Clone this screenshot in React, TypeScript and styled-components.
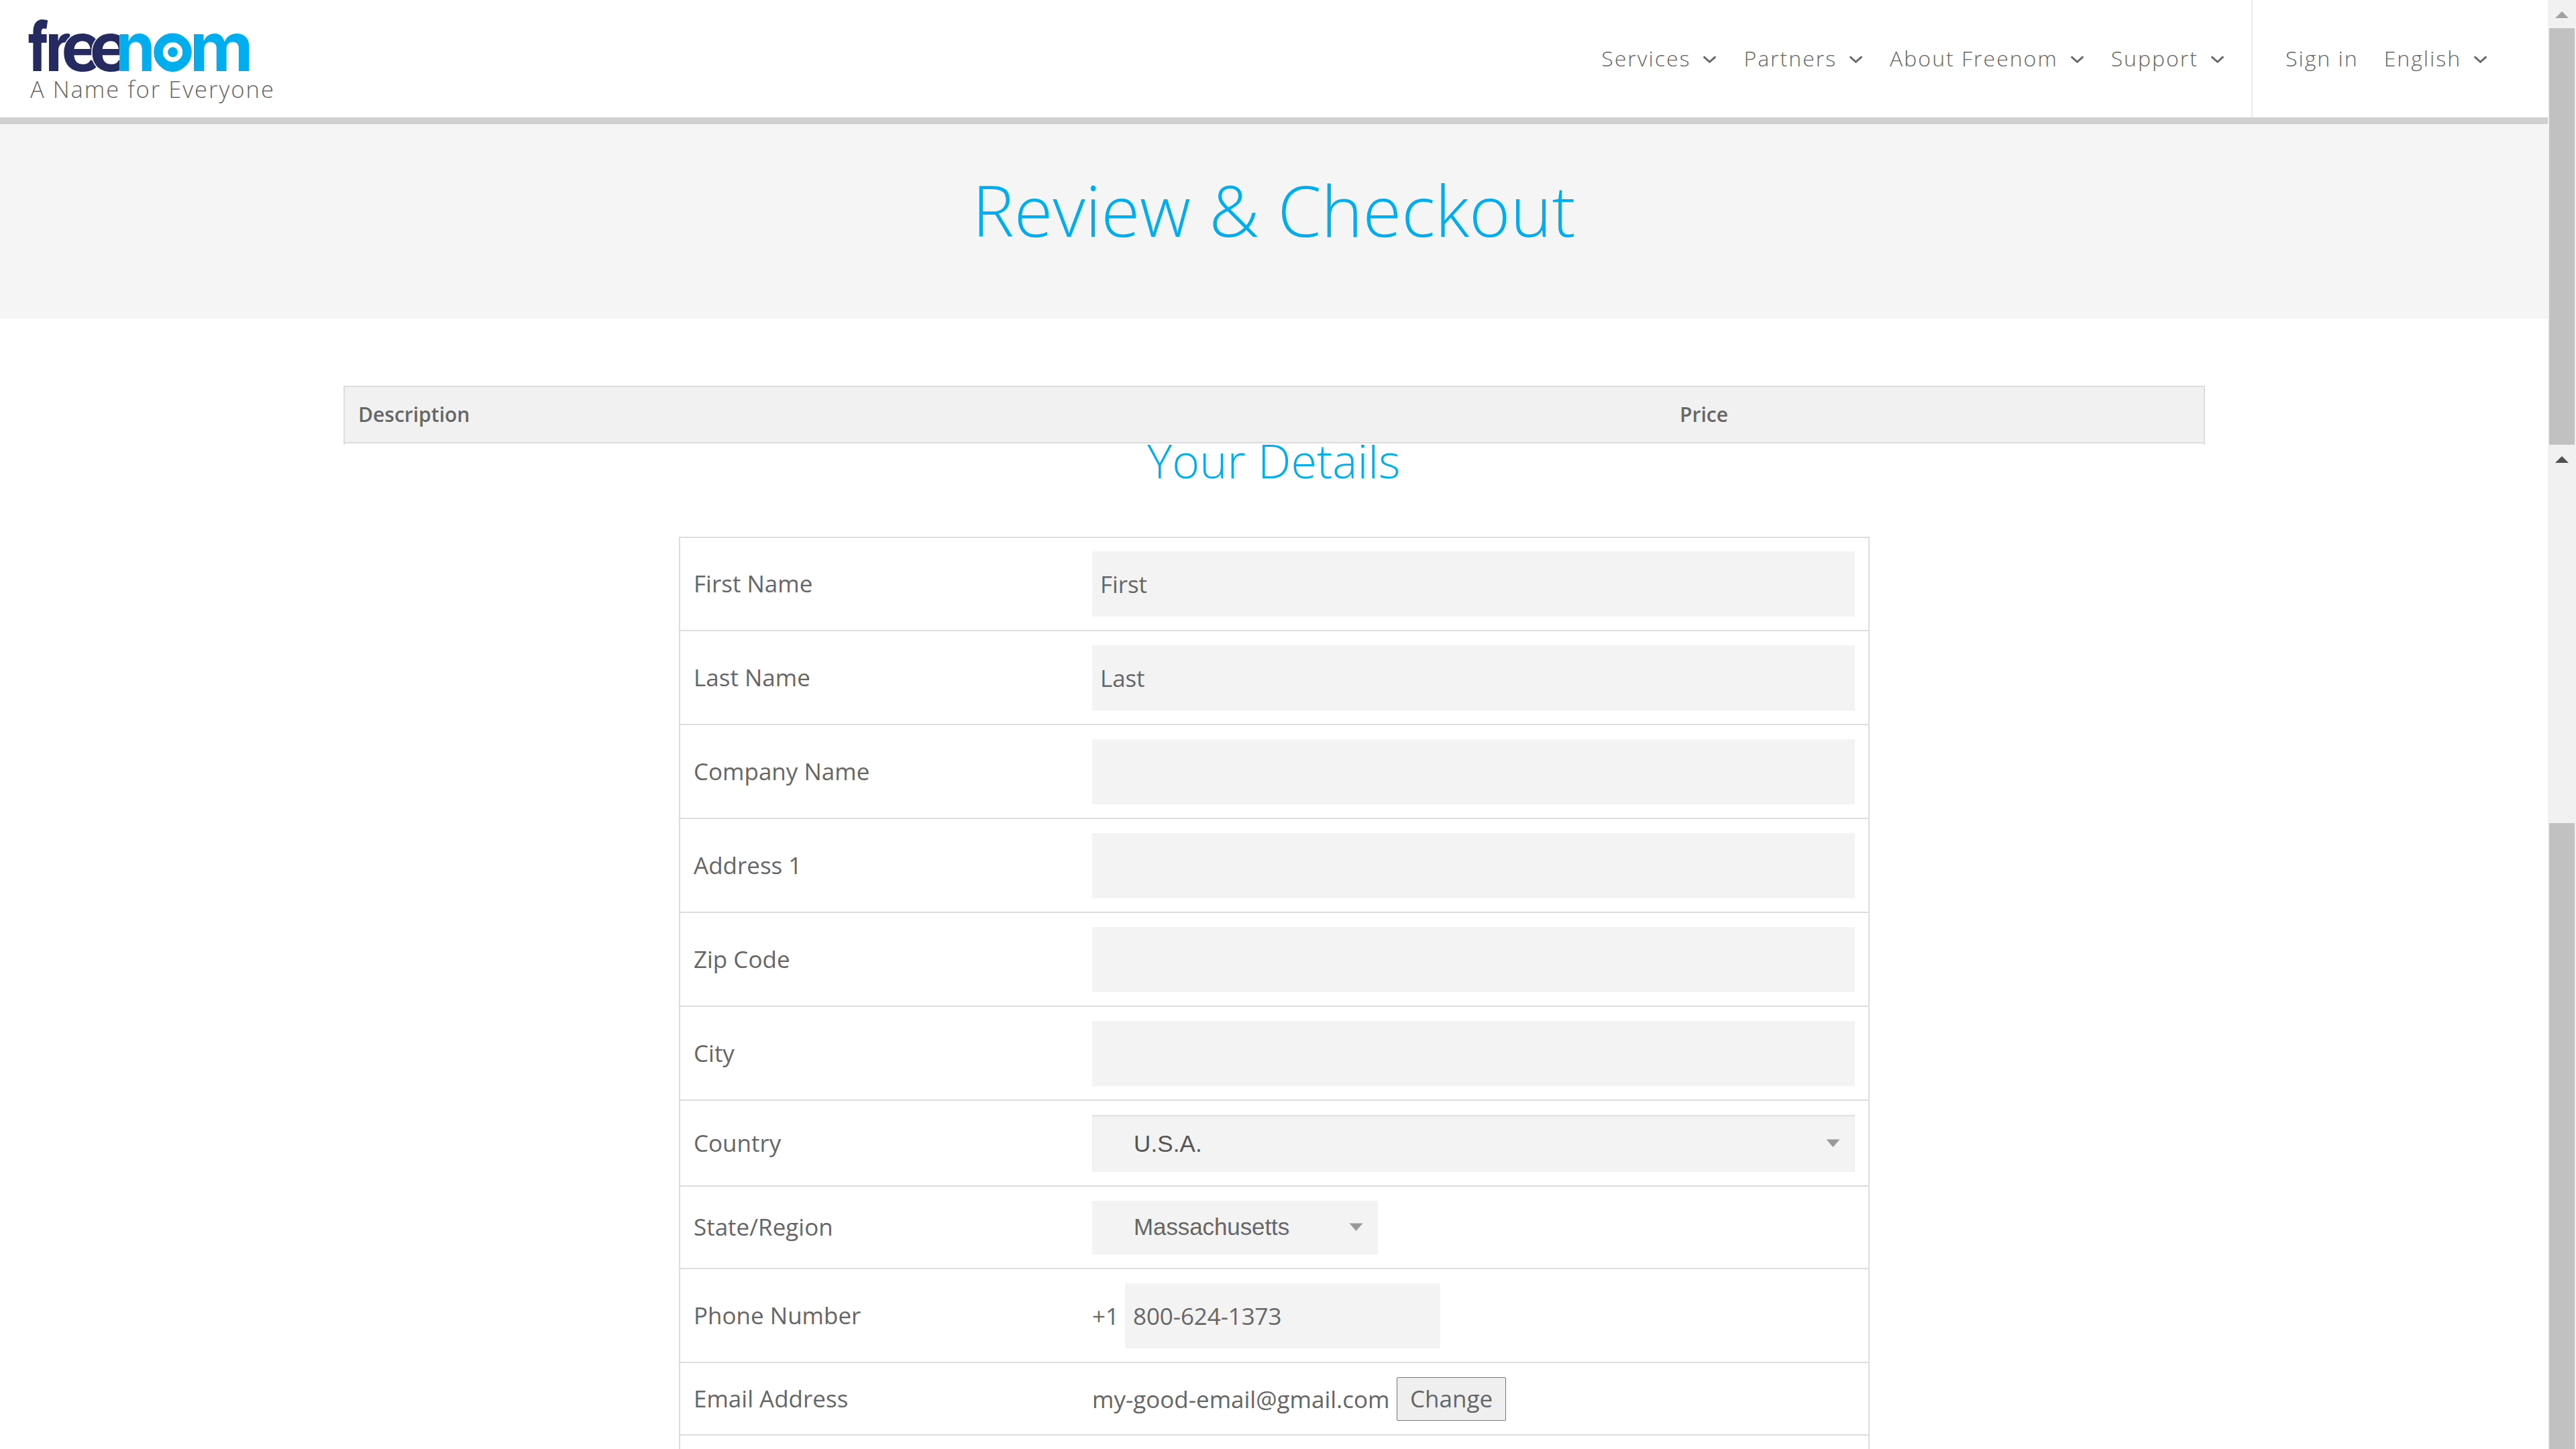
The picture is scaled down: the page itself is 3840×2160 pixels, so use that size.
import React from "react";
import styled, { createGlobalStyle, css } from "styled-components";

const sans = `"Open Sans", "Noto Sans", sans-serif`;
const arial = `"Liberation Sans", Arial, sans-serif`;
const ink = "#666666";
const cyan = "#00aeef";
const navy = "#252b60";
const line = "#dddddd";
const fieldBg = "#f3f3f3";

const GlobalStyle = createGlobalStyle`
  *, *::before, *::after { box-sizing: border-box; }
  html, body { margin: 0; background: #ffffff; overflow: hidden; }
  body { font-family: ${sans}; font-size: 35px; color: ${ink}; }
`;

const Shell = styled.div`
  display: grid;
  grid-template-columns: 1fr 42px;
  width: 3840px;
  height: 2160px;
  overflow: hidden;
`;

const Page = styled.div`
  display: flex;
  flex-direction: column;
  min-width: 0;
  height: 2160px;
  overflow: hidden;
`;

/* ---------- header ---------- */

const Header = styled.header`
  display: flex;
  flex: none;
  height: 185px;
  background: #ffffff;
  border-bottom: 10px solid #d0d0d0;
`;

const Brand = styled.a`
  display: flex;
  flex-direction: column;
  padding: 20px 0 0 43px;
  color: inherit;
  text-decoration: none;
`;

const Wordmark = styled.svg`
  display: block;
  width: 340px;
  height: 90px;
  overflow: visible;
  font-family: Inter, ${arial};
  font-size: 101px;
  font-weight: 700;
`;

const Tagline = styled.span`
  padding-left: 2px;
  font-size: 34.5px;
  font-weight: 300;
  line-height: 45px;
  letter-spacing: 2px;
  white-space: nowrap;
`;

const Nav = styled.nav`
  display: flex;
  align-items: center;
  gap: 40px;
  margin-left: auto;
  padding-right: 40px;
  border-right: 2px solid #ececec;
`;

const UserNav = styled.nav`
  display: flex;
  align-items: center;
  gap: 38px;
  width: 440px;
  padding-left: 49px;
`;

const NavLink = styled.a`
  display: flex;
  align-items: center;
  gap: 18px;
  padding-bottom: 2px;
  font-size: 32px;
  font-weight: 300;
  line-height: 44px;
  letter-spacing: 2px;
  white-space: nowrap;
  color: ${ink};
  text-decoration: none;
`;

const ChevronSvg = styled.svg`
  display: block;
  width: 21px;
  height: 13px;
  margin-top: 5px;
  fill: none;
  stroke: ${ink};
  stroke-width: 2.8;
`;

/* ---------- title band ---------- */

const Hero = styled.section`
  flex: none;
  height: 290px;
  padding-top: 58px;
  background: #f5f5f5;
  text-align: center;
`;

const Title = styled.h1`
  margin: 0;
  font-size: 105px;
  font-weight: 300;
  line-height: 140px;
  color: ${cyan};
`;

/* ---------- cart ---------- */

const Cart = styled.section`
  flex: none;
  display: flex;
  width: 2775px;
  height: 88px;
  margin: 100px 0 0 512px;
  border: solid ${line};
  border-width: 2px 2px 0;
`;

const CartHead = styled.div`
  display: grid;
  grid-template-columns: 1970px 1fr;
  align-items: center;
  width: 100%;
  height: 84px;
  background: #f1f1f1;
  border-bottom: 2px solid ${line};
  font-size: 30px;
  font-weight: 600;
  line-height: 40px;
`;

const CartCell = styled.span`
  padding-left: 20px;
`;

/* ---------- details ---------- */

const DetailsTitle = styled.h2`
  flex: none;
  height: 137px;
  margin: 0;
  overflow: hidden;
  font-size: 70px;
  font-weight: 300;
  line-height: 46px;
  text-align: center;
  color: ${cyan};
`;

const Form = styled.form`
  flex: none;
  width: 1775px;
  margin-left: 1012px;
  border: 2px solid ${line};
  border-bottom: 0;
`;

const Row = styled.div<{ $first?: boolean }>`
  display: grid;
  grid-template-columns: 594px 1137px;
  align-items: center;
  padding: ${(p) => (p.$first ? 20 : 21)}px 20px 20px;
  border-bottom: 2px solid ${line};
`;

const EmptyRow = styled.div`
  height: 20px;
`;

const Label = styled.label`
  padding-bottom: 2px;
  line-height: 48px;
`;

const Field = styled.div`
  display: flex;
  align-items: center;
`;

const Input = styled.input<{ $width?: number }>`
  width: ${(p) => (p.$width ? `${p.$width}px` : "100%")};
  height: 97px;
  padding: 0 12px;
  border: 0;
  outline: 0;
  border-radius: 0;
  background: ${fieldBg};
  font: 400 35px ${sans};
  letter-spacing: -0.1px;
  color: ${ink};
`;

const SelectBox = styled.button<{ $wide?: boolean }>`
  display: flex;
  align-items: center;
  justify-content: space-between;
  border: 0;
  background: ${fieldBg};
  font: 400 35px/44px ${arial};
  ${(p) =>
    p.$wide
      ? css`
          width: 100%;
          height: 85px;
          padding: 0 22px 0 62px;
          color: #555555;
          letter-spacing: 0.1px;
          box-shadow: inset 0 2px 2px rgba(0, 0, 0, 0.075);
        `
      : css`
          width: 426px;
          height: 80px;
          padding: 0 22px 2px 62px;
          color: ${ink};
          letter-spacing: -0.1px;
        `}
`;

const CaretSvg = styled.svg`
  display: block;
  width: 21px;
  height: 13px;
  fill: #999999;
`;

const Prefix = styled.span`
  width: 49px;
  line-height: 48px;
`;

const Email = styled.span`
  width: 454px;
  line-height: 48px;
`;

const ChangeButton = styled.button`
  display: flex;
  align-items: center;
  justify-content: center;
  width: 163px;
  height: 65px;
  padding: 0 0 2px;
  border: 1px solid #767676;
  border-radius: 2px;
  background: #efefef;
  font: 400 35px/48px ${sans};
  color: ${ink};
`;

/* ---------- scrollbar ---------- */

const Rail = styled.aside`
  display: flex;
  flex-direction: column;
  height: 2160px;
  padding: 0 2px;
  background: #f1f1f1;
`;

const RailButton = styled.div<{ $height: number }>`
  flex: none;
  display: flex;
  justify-content: center;
  height: ${(p) => p.$height}px;
  padding-top: 17px;
`;

const Thumb = styled.div<{ $height: number }>`
  flex: none;
  height: ${(p) => p.$height}px;
  background: #c1c1c1;
`;

const ArrowSvg = styled.svg<{ $color: string }>`
  display: block;
  width: 20px;
  height: 10px;
  fill: ${(p) => p.$color};
`;

const Chevron = () => (
  <ChevronSvg viewBox="0 0 21 13">
    <path d="M1.6 1.4 L10.5 9.3 L19.4 1.4" />
  </ChevronSvg>
);

const Caret = () => (
  <CaretSvg viewBox="0 0 21 13">
    <path d="M0.5 0.5 H20.5 L10.5 12 Z" />
  </CaretSvg>
);

const Arrow = ({ color }: { color: string }) => (
  <ArrowSvg viewBox="0 0 20 10" $color={color}>
    <path d="M0 10 L10 0 L20 10 Z" />
  </ArrowSvg>
);

type GlyphProps = { ch: string; x: number; sx?: number; fill: string; halo?: boolean; weight?: number };

const Glyph = ({ ch, x, sx = 1, fill, halo, weight }: GlyphProps) => (
  <text
    transform={`translate(${x} 105.7) scale(${sx} 1)`}
    fill={fill}
    fontWeight={weight}
    stroke={halo ? "#ffffff" : "none"}
    strokeWidth={halo ? 3 : 0}
    paintOrder="stroke"
  >
    {ch}
  </text>
);

const Logo = () => (
  <Wordmark viewBox="43 20 340 90">
    <Glyph ch="f" x={42} sx={0.72} fill={navy} weight={800} />
    <Glyph ch="r" x={67} sx={0.95} fill={navy} />
    <Glyph ch="e" x={91.2} sx={1.03} fill={navy} halo />
    <Glyph ch="e" x={133.5} sx={1.03} fill={navy} halo />
    {/* the second "e" stops where the cyan half begins */}
    <rect x="178.3" y="40" width="22" height="70" fill="#ffffff" />
    <Glyph ch="n" x={172.5} sx={0.94} fill={cyan} />
    <Glyph ch="o" x={229.6} sx={0.9} fill={cyan} />
    <circle cx="257.5" cy="77.7" r="21.5" fill="#ffffff" stroke={cyan} strokeWidth="13.6" />
    <circle cx="257.5" cy="77.7" r="7.4" fill={cyan} />
    <Glyph ch="m" x={282.6} sx={1.035} fill={cyan} />
  </Wordmark>
);

const textRows = [
  { label: "First Name", value: "First" },
  { label: "Last Name", value: "Last" },
  { label: "Company Name", value: "" },
  { label: "Address 1", value: "" },
  { label: "Zip Code", value: "" },
  { label: "City", value: "" },
];

export default function App() {
  return (
    <>
      <GlobalStyle />
      <Shell>
        <Page>
          <Header>
            <Brand>
              <Logo />
              <Tagline>A Name for Everyone</Tagline>
            </Brand>
            <Nav>
              {["Services", "Partners", "About Freenom", "Support"].map((item) => (
                <NavLink key={item}>
                  {item}
                  <Chevron />
                </NavLink>
              ))}
            </Nav>
            <UserNav>
              <NavLink>Sign in</NavLink>
              <NavLink>
                English
                <Chevron />
              </NavLink>
            </UserNav>
          </Header>

          <Hero>
            <Title>Review &amp; Checkout</Title>
          </Hero>

          <Cart>
            <CartHead>
              <CartCell>Description</CartCell>
              <CartCell>Price</CartCell>
            </CartHead>
          </Cart>

          <DetailsTitle>Your Details</DetailsTitle>

          <Form>
            {textRows.map((row, i) => (
              <Row key={row.label} $first={i === 0}>
                <Label>{row.label}</Label>
                <Field>
                  <Input defaultValue={row.value} />
                </Field>
              </Row>
            ))}
            <Row>
              <Label>Country</Label>
              <Field>
                <SelectBox type="button" $wide>
                  U.S.A.
                  <Caret />
                </SelectBox>
              </Field>
            </Row>
            <Row>
              <Label>State/Region</Label>
              <Field>
                <SelectBox type="button">
                  Massachusetts
                  <Caret />
                </SelectBox>
              </Field>
            </Row>
            <Row>
              <Label>Phone Number</Label>
              <Field>
                <Prefix>+1</Prefix>
                <Input $width={470} defaultValue="800-624-1373" />
              </Field>
            </Row>
            <Row>
              <Label>Email Address</Label>
              <Field>
                <Email>my-good-email@gmail.com</Email>
                <ChangeButton type="button">Change</ChangeButton>
              </Field>
            </Row>
            <EmptyRow />
          </Form>
        </Page>

        <Rail>
          <RailButton $height={42}>
            <Arrow color="#a3a3a3" />
          </RailButton>
          <Thumb $height={621} />
          <RailButton $height={564}>
            <Arrow color="#505050" />
          </RailButton>
          <Thumb $height={933} />
        </Rail>
      </Shell>
    </>
  );
}
